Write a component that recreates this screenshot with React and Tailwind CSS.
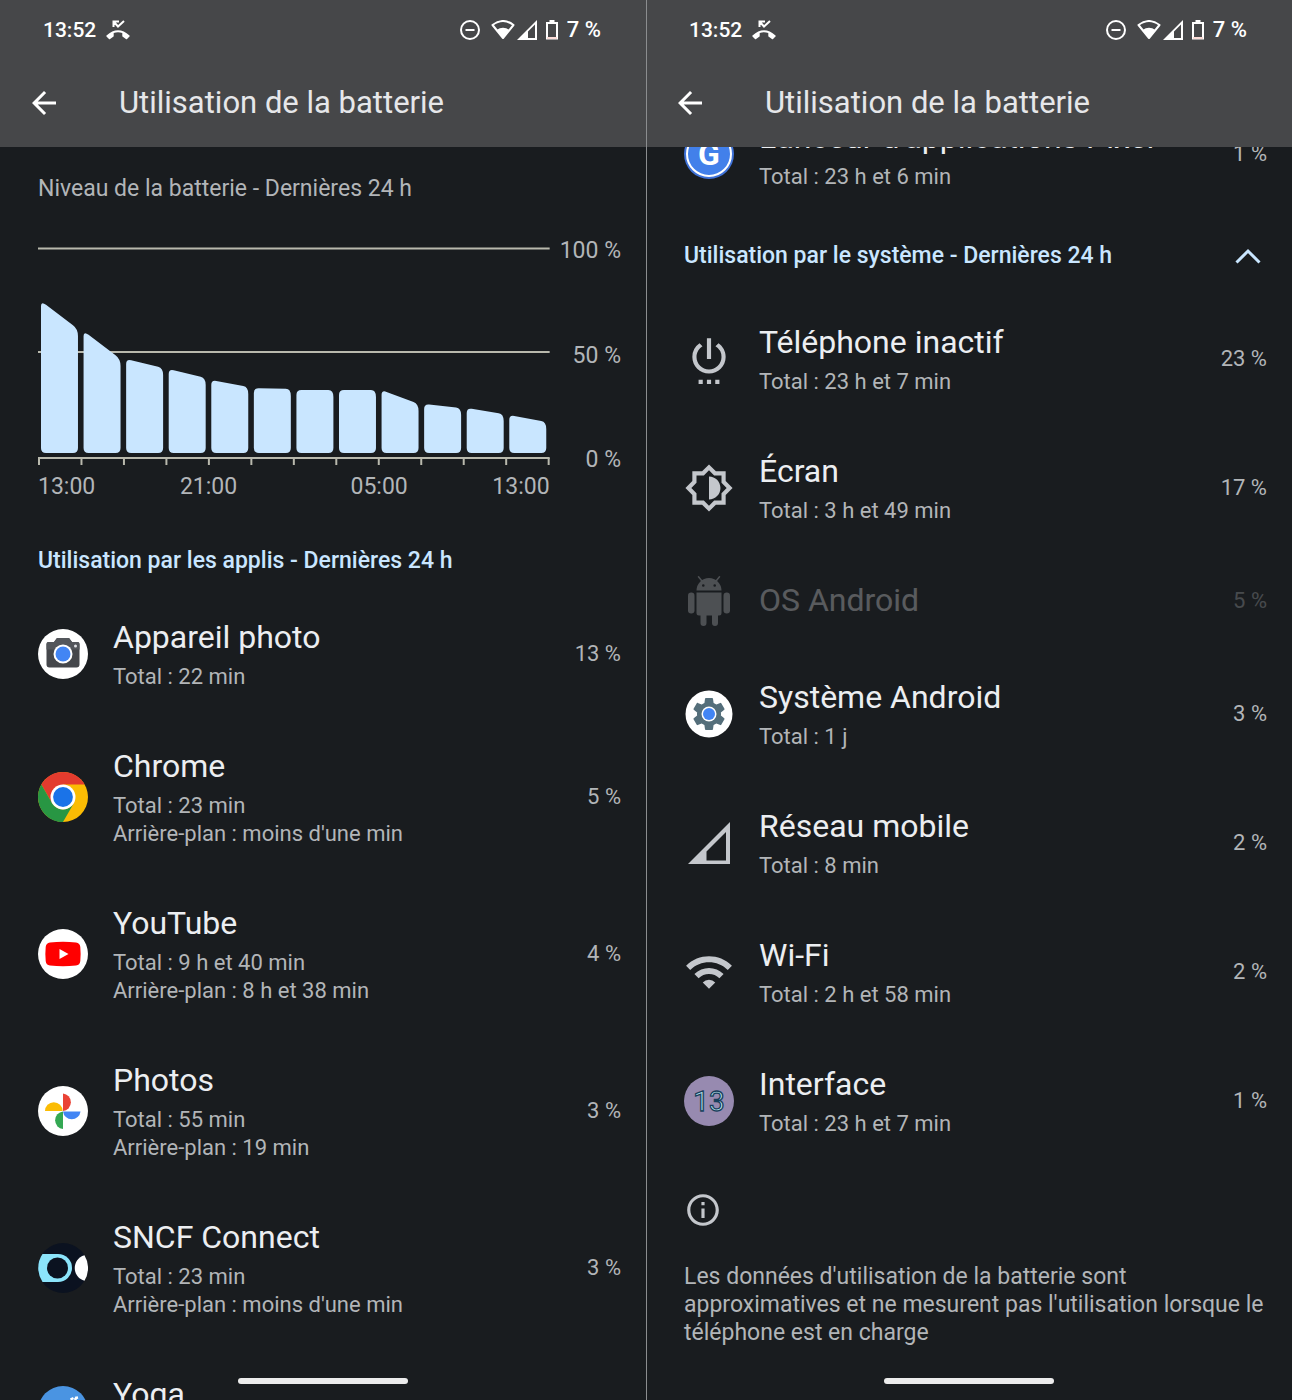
// src/App.jsx
import React from 'react';
import {
  MdArrowBack,
  MdInfoOutline,
  MdOutlineBrightness6,
  MdSettings,
  MdSettingsPower,
  MdWifi,
} from 'react-icons/md';

// Chart geometry, in viewBox units
const SLOT = 42.6;
const BAR_WIDTH = 37;
const BASELINE = 206;

// Top edge of each two-hour bar, [left, right]
const bars = [
  [54, 82],
  [84, 112],
  [112, 121],
  [122, 131],
  [133, 140],
  [141, 142],
  [143, 143],
  [143, 143],
  [143, 157],
  [157, 161],
  [161, 167],
  [168, 175],
];

const barPath = ([left, right], index) => {
  const x1 = 3 + index * SLOT;
  const x2 = x1 + BAR_WIDTH;
  const slope = (right - left) / BAR_WIDTH;
  const r = 5;
  return [
    `M${x1} ${left + r}`,
    `Q${x1} ${left} ${x1 + r} ${left + r * slope}`,
    `L${x2 - r} ${right - r * slope}`,
    `Q${x2} ${right} ${x2} ${right + r + 2}`,
    `V${BASELINE - r} Q${x2} ${BASELINE} ${x2 - r} ${BASELINE}`,
    `H${x1 + r} Q${x1} ${BASELINE} ${x1} ${BASELINE - r} Z`,
  ].join(' ');
};

const CameraIcon = () => (
  <svg viewBox="0 0 50 50" className="size-[50px]" aria-hidden="true">
    <circle cx="25" cy="25" r="25" fill="#fff" />
    <path d="M10.500 13h5.500l3-4h12l3 4h5.500a2 2 0 0 1 2 2v20.500a3 3 0 0 1-3 3h-27a3 3 0 0 1-3-3V15a2 2 0 0 1 2-2z" fill="#45474b" />
    <path d="M8.500 20.500V15a2 2 0 0 1 2-2h5.500l3-4h12l3 4h5.500a2 2 0 0 1 2 2v5.500z" fill="#53565b" />
    <circle cx="37.500" cy="17" r="1.500" fill="#dfe1e5" />
    <circle cx="25" cy="25" r="9.500" fill="#fff" />
    <circle cx="25" cy="25" r="7.500" fill="#4285f4" />
  </svg>
);

const ChromeIcon = () => (
  <svg viewBox="0 0 48 48" className="size-[50px]" aria-hidden="true">
    <circle cx="24" cy="24" r="24" fill="#fbbc04" />
    <path d="M24 12h20.780A24 24 0 0 0 3.220 12l10.390 18z" fill="#e33b2e" />
    <path d="M34.390 30 24 48A24 24 0 0 1 3.220 12l10.390 18A12 12 0 0 0 34.390 30z" fill="#289643" />
    <circle cx="24" cy="24" r="12" fill="#fff" />
    <circle cx="24" cy="24" r="9.500" fill="#1a73e8" />
  </svg>
);

const YouTubeIcon = () => (
  <svg viewBox="0 0 50 50" className="size-[50px]" aria-hidden="true">
    <circle cx="25" cy="25" r="25" fill="#fff" />
    <path d="M12 13.500Q25 12 38 13.500Q42 14 42.300 18Q43 25 42.300 32Q42 36 38 36.500Q25 38 12 36.500Q8 36 7.700 32Q7 25 7.700 18Q8 14 12 13.500z" fill="#f00" />
    <path d="M21.500 20v10l9-5z" fill="#fff" />
  </svg>
);

const PhotosIcon = () => (
  <svg viewBox="0 0 50 50" className="size-[50px]" aria-hidden="true">
    <circle cx="25" cy="25" r="25" fill="#fff" />
    <path d="M25 7.500a8.800 8.800 0 0 1 0 17.500z" fill="#ea4335" />
    <path d="M42.500 25.500a8.800 8.800 0 0 1-17.500 0z" fill="#4285f4" />
    <path d="M25 43a8.800 8.800 0 0 1 0-17.500z" fill="#34a853" />
    <path d="M7 25a8.800 8.800 0 0 1 17.600 0z" fill="#fbbc04" />
  </svg>
);

const SncfIcon = () => (
  <svg viewBox="0 0 50 50" className="size-[50px]" aria-hidden="true">
    <circle cx="25" cy="25" r="25" fill="#0b1220" />
    <path d="M4.500 11H20a14 14 0 0 1 0 28H4.500A25 25 0 0 1 4.500 11z" fill="#8be4fb" />
    <circle cx="19.500" cy="25" r="10.500" fill="#0b1220" />
    <path d="M46.500 12.200a25 25 0 0 1 0 25.600C33.500 34 33.500 16 46.500 12.200z" fill="#fff" />
  </svg>
);

const YogaIcon = () => (
  <svg viewBox="0 0 50 50" className="size-[50px]" aria-hidden="true">
    <circle cx="25" cy="25" r="25" fill="#4a94e2" />
    <path d="M32.500 13.500l3-1.500M37 12l3-.6M37.500 12v8l-12 8-8 10" fill="none" stroke="#fff" strokeWidth="2.500" />
  </svg>
);

const LauncherIcon = () => (
  <svg viewBox="0 0 50 50" className="size-[50px]" aria-hidden="true">
    <circle cx="25" cy="25" r="25" fill="#3f72d8" />
    <circle cx="25" cy="25" r="22" fill="#4280ea" stroke="#fff" strokeWidth="2" />
    <text x="25" y="36" textAnchor="middle" fontSize="32" fontWeight="700" fill="#fff">G</text>
  </svg>
);

const IdleIcon = () => <MdSettingsPower size={50} />;
const DisplayIcon = () => <MdOutlineBrightness6 size={50} />;
const WifiIcon = () => <MdWifi size={50} />;

const AndroidIcon = () => (
  <svg viewBox="0 0 50 50" className="size-[50px]" fill="currentColor" aria-hidden="true">
    <path fillRule="evenodd" d="M12.500 14.500a12.500 12.500 0 0 1 25 0zM18 9.500a1.300 1.300 0 1 0 2.600 0a1.300 1.300 0 1 0-2.600 0zM29.400 9.500a1.300 1.300 0 1 0 2.600 0a1.300 1.300 0 1 0-2.600 0z" />
    <path d="M14.500.800l4 5M35.500.800l-4 5" stroke="currentColor" strokeWidth="1.500" strokeLinecap="round" />
    <path d="M12.500 16.500h25V37a2.500 2.500 0 0 1-2.500 2.500h-1V47a3 3 0 0 1-6 0v-7.500h-5.500V47a3 3 0 0 1-6 0v-7.500H15a2.500 2.500 0 0 1-2.500-2.500z" />
    <rect x="4" y="16.500" width="6.500" height="21" rx="3.200" />
    <rect x="39.500" y="16.500" width="6.500" height="21" rx="3.200" />
  </svg>
);

const SystemIcon = () => (
  <svg viewBox="0 0 50 50" className="size-[50px]" aria-hidden="true">
    <circle cx="25" cy="25" r="23.500" fill="#fff" />
    <MdSettings x="5" y="5" size={40} color="#546e7a" />
    <circle cx="25" cy="25" r="7.500" fill="#fff" />
    <circle cx="25" cy="25" r="6" fill="#4285f4" />
  </svg>
);

const MobileIcon = () => (
  <svg viewBox="0 0 50 50" className="size-[50px]" fill="currentColor" aria-hidden="true">
    <path fillRule="evenodd" d="M4 46 46 4v42zM22.500 33.500v9H42V14z" />
  </svg>
);

const InterfaceIcon = () => (
  <svg viewBox="0 0 50 50" className="size-[50px]" aria-hidden="true">
    <circle cx="25" cy="25" r="25" fill="#978ab0" />
    <text x="25" y="35" textAnchor="middle" fontSize="28" fill="#b5e4ee" stroke="#173f5c" strokeWidth="1.300">
      13
    </text>
  </svg>
);

const apps = [
  { name: 'Appareil photo', Icon: CameraIcon, details: ['Total : 22 min'], usage: '13 %' },
  { name: 'Chrome', Icon: ChromeIcon, details: ['Total : 23 min', "Arrière-plan : moins d'une min"], usage: '5 %' },
  { name: 'YouTube', Icon: YouTubeIcon, details: ['Total : 9 h et 40 min', 'Arrière-plan : 8 h et 38 min'], usage: '4 %' },
  { name: 'Photos', Icon: PhotosIcon, details: ['Total : 55 min', 'Arrière-plan : 19 min'], usage: '3 %' },
  { name: 'SNCF Connect', Icon: SncfIcon, details: ['Total : 23 min', "Arrière-plan : moins d'une min"], usage: '3 %' },
  { name: 'Yoga', Icon: YogaIcon, details: [''], usage: '' },
];

const launcher = {
  name: "Lanceur d'applications Pixel",
  Icon: LauncherIcon,
  details: ['Total : 23 h et 6 min'],
  usage: '1 %',
};

const systemItems = [
  { name: 'Téléphone inactif', Icon: IdleIcon, details: ['Total : 23 h et 7 min'], usage: '23 %' },
  { name: 'Écran', Icon: DisplayIcon, details: ['Total : 3 h et 49 min'], usage: '17 %' },
  { name: 'OS Android', Icon: AndroidIcon, details: [], usage: '5 %', disabled: true },
  { name: 'Système Android', Icon: SystemIcon, details: ['Total : 1 j'], usage: '3 %' },
  { name: 'Réseau mobile', Icon: MobileIcon, details: ['Total : 8 min'], usage: '2 %' },
  { name: 'Wi-Fi', Icon: WifiIcon, details: ['Total : 2 h et 58 min'], usage: '2 %' },
  { name: 'Interface', Icon: InterfaceIcon, details: ['Total : 23 h et 7 min'], usage: '1 %' },
];

const StatusBar = () => (
  <div className="flex h-[60px] items-center justify-between pl-[43px] pr-[45px] text-[21px] font-medium leading-7 text-white">
    <div className="flex items-center gap-2.5">
      <span>13:52</span>
      {/* Missed call */}
      <svg viewBox="0 0 24 20" className="h-5 w-6" aria-hidden="true">
        <path
          d="M.5 15.500Q12 5 23.500 15.500Q24 16 23.500 16.500L21 19Q20.500 19.400 19.900 19L16.800 16.800Q16.300 16.500 16.300 15.900V12.900Q12 11.500 7.700 12.900V15.900Q7.700 16.500 7.200 16.800L4.100 19Q3.500 19.400 3 19L.5 16.500Q0 16 .5 15.500z"
          fill="currentColor"
        />
        <path d="M7.500 7V1.500H13M7.500 1.500 12 6.500 18 1" fill="none" stroke="currentColor" strokeWidth="2" />
      </svg>
    </div>
    <div className="flex items-center">
      <svg viewBox="0 0 22 22" className="mr-2.5 size-[22px]" fill="none" stroke="currentColor" strokeWidth="2" aria-hidden="true">
        <circle cx="11" cy="11" r="9" />
        <path d="M6.500 11h9" />
      </svg>
      <svg viewBox="0 0 24 20" className="mr-0.5 h-5 w-6" aria-hidden="true">
        <path d="M1.500 5Q12-3 22.500 5L12 18z" fill="none" stroke="currentColor" strokeWidth="2" strokeLinejoin="round" />
        <path d="M5.500 10Q12 5.500 18.500 10L12 18.500z" fill="currentColor" />
      </svg>
      <svg viewBox="0 0 20 20" className="mr-2 size-5" fill="currentColor" aria-hidden="true">
        <path fillRule="evenodd" d="M0 20 20 0v20zM11 11.500V18h7V4.500z" />
      </svg>
      <svg viewBox="0 0 14 20" className="mr-2 h-5 w-3.5" aria-hidden="true">
        <path d="M4.500 0h5v2h-5z" fill="currentColor" />
        <path d="M2 3h10v15.500H2z" fill="none" stroke="currentColor" strokeWidth="2" />
        <path d="M2 17h10v2H2z" fill="#fbdcd8" />
      </svg>
      <span className="text-[22px]">7 %</span>
    </div>
  </div>
);

const Header = () => (
  <header className="relative z-10 shrink-0 bg-[#464749]">
    <StatusBar />
    <div className="flex h-[87px] items-center gap-[57px] pl-[26px] pb-px">
      <button type="button" aria-label="Retour" className="text-white">
        <MdArrowBack size={36} />
      </button>
      <h1 className="text-[31px] leading-10 text-[#e6e7ea]">Utilisation de la batterie</h1>
    </div>
  </header>
);

const UsageRow = ({ item }) => {
  const { name, Icon, details, usage, disabled } = item;
  return (
    <li className={`flex items-center py-[27px] text-[#c4c7cc] ${disabled ? 'opacity-30' : ''}`}>
      <div className="mr-[25px] flex h-10 w-[50px] shrink-0 items-center justify-center">
        <Icon />
      </div>
      <div className="min-w-0 flex-1">
        <h3 className="text-[32px] leading-[43px] text-[#eceef1]">{name}</h3>
        {details.length > 0 && (
          <div className="mt-1 text-[22px] leading-7 text-[#b2b5b8]">
            {details.map((line) => (
              <p key={line} className="min-h-7">{line}</p>
            ))}
          </div>
        )}
      </div>
      <span className="shrink-0 text-[22px] leading-7 text-[#b2b5b8]">{usage}</span>
    </li>
  );
};

const BatteryChart = () => (
  <div className="mt-[34px] flex gap-2.5 text-[23px] leading-7 text-[#b2b5b8]">
    <div className="flex-1 pt-2.5">
      <svg viewBox="0 0 512 218" preserveAspectRatio="none" className="h-[218px] w-full" role="img" aria-label="Niveau de la batterie">
        <path d="M0 1.500H512M0 105H512M0 211H512" stroke="#b9b9ad" strokeWidth="2" />
        {bars.map((bar, i) => (
          <path key={i} d={barPath(bar, i)} fill="#c9e6ff" />
        ))}
        {Array.from({ length: 13 }, (_, i) => (
          <path key={i} d={`M${1 + i * 42.5} 211v7`} stroke="#b9b9ad" strokeWidth="2" />
        ))}
      </svg>
      <div className="mt-2 grid grid-cols-6">
        <span>13:00</span>
        <span className="col-span-2 text-center">21:00</span>
        <span className="col-span-2 text-center">05:00</span>
        <span className="text-right">13:00</span>
      </div>
    </div>
    <div className="flex h-[237px] flex-col justify-between text-right">
      <span>100 %</span>
      <span>50 %</span>
      <span>0 %</span>
    </div>
  </div>
);

const Screen = ({ children, divided }) => (
  <section className="relative flex h-full min-w-0 flex-col overflow-hidden bg-[#191c1f]">
    <Header />
    <main className="min-h-0 flex-1 overflow-hidden pl-[38px] pr-[25px]">{children}</main>
    {divided && <div className="absolute inset-y-0 left-0 z-20 w-px bg-[#8b8d8f]" />}
    {/* Gesture bar */}
    <div className="absolute bottom-4 left-1/2 h-1.5 w-[170px] -translate-x-1/2 rounded-full bg-[#ececec]" />
  </section>
);

const App = () => {
  return (
    <div className="grid h-screen grid-cols-2 font-[Roboto,'Liberation_Sans',sans-serif]">
      <Screen>
        <p className="mt-7 text-[23px] leading-7 text-[#b2b5b8]">Niveau de la batterie - Dernières 24 h</p>
        <BatteryChart />
        <h2 className="mt-[31px] flex h-[57px] items-center text-[23px] font-medium leading-7 text-[#c9e6ff]">
          Utilisation par les applis - Dernières 24 h
        </h2>
        <ul>
          {apps.map((item) => (
            <UsageRow key={item.name} item={item} />
          ))}
        </ul>
      </Screen>

      <Screen divided>
        {/* Scrolled past the end of the app list */}
        <ul className="-mt-[58px]">
          <UsageRow item={launcher} />
        </ul>
        <div className="flex h-[76px] items-center justify-between text-[#c9e6ff]">
          <h2 className="text-[23px] font-medium leading-7">Utilisation par le système - Dernières 24 h</h2>
          <button type="button" aria-label="Réduire" className="px-1.5 py-2">
            <svg viewBox="0 0 26 16" className="h-4 w-[26px]" fill="none" stroke="currentColor" strokeWidth="3" aria-hidden="true">
              <path d="M1.500 14.500 13 3l11.500 11.500" />
            </svg>
          </button>
        </div>
        <ul>
          {systemItems.map((item) => (
            <UsageRow key={item.name} item={item} />
          ))}
        </ul>
        <footer className="mt-[26px] text-[#c4c7cc]">
          <MdInfoOutline size={38} />
          <p className="mt-[34px] text-[23px] leading-7 text-[#b2b5b8]">
            Les données d'utilisation de la batterie sont approximatives et ne mesurent pas l'utilisation lorsque le
            téléphone est en charge
          </p>
        </footer>
      </Screen>
    </div>
  );
};

export default App;
